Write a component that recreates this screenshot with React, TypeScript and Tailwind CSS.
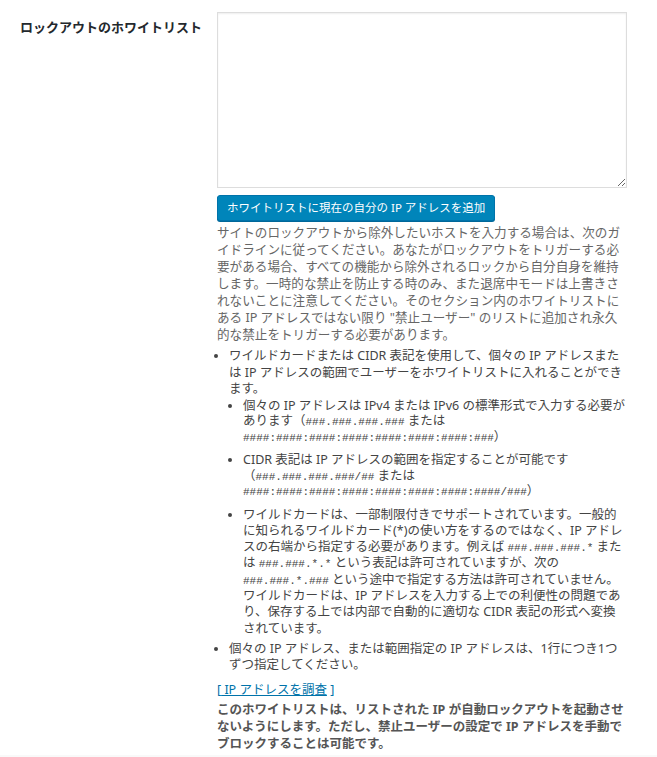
import React from 'react';

const font = { fontFamily: '"Noto Sans", "Noto Sans CJK JP", sans-serif' };

const Code = ({ children }: { children: React.ReactNode }) => (
  <code className="font-['Liberation_Mono',monospace] text-[11px] leading-none">{children}</code>
);

export default function App() {
  return (
    <div className="min-h-[757px] bg-white" style={font}>
      <div className="flex">
        {/* Label column */}
        <div className="w-[217px] shrink-0 pl-[20px] pt-[14px]">
          <label className="text-[13px] font-bold leading-[20px] text-[#23282d]">ロックアウトのホワイトリスト</label>
        </div>

        {/* Field column */}
        <div className="w-[410px] pt-[12px] pb-[3px]">
          <textarea className="block h-[176px] w-[410px] resize border border-[#dddddd] bg-white shadow-[inset_0_1px_2px_rgba(0,0,0,0.07)] outline-none" />

          <button
            type="button"
            className="mt-[7px] flex h-[26px] items-center rounded-[3px] border border-[#0073aa] bg-[#0085ba] px-[9px] text-[11.5px] leading-none text-white shadow-[0_1px_0_#006799]"
          >
            ホワイトリストに現在の自分の IP アドレスを追加
          </button>

          <p className="mt-[3px] text-[12.6px] leading-[17px] text-[#666666]">
            サイトのロックアウトから除外したいホストを入力する場合は、次のガイドラインに従ってください。あなたがロックアウトをトリガーする必要がある場合、すべての機能から除外されるロックから自分自身を維持します。一時的な禁止を防止する時のみ、また退席中モードは上書きされないことに注意してください。そのセクション内のホワイトリストにある IP アドレスではない限り "禁止ユーザー" のリストに追加され永久的な禁止をトリガーする必要があります。
          </p>

          <ul className="mt-[5px] list-disc pl-[12px] text-[12.5px] leading-[16.5px] text-[#444444] marker:text-[#444444]">
            <li className="mb-[4px]">
              ワイルドカードまたは CIDR 表記を使用して、個々の IP アドレスまたは IP アドレスの範囲でユーザーをホワイトリストに入れることができます。
              <ul className="list-disc pl-[14px]">
                <li className="mb-[8px] leading-[15.5px]">
                  個々の IP アドレスは IPv4 または IPv6 の標準形式で入力する必要があります（<Code>###.###.###.###</Code> または <Code>####:####:####:####:####:####:####:###</Code>）
                </li>
                <li className="mb-[8px] leading-[15.5px]">
                  CIDR 表記は IP アドレスの範囲を指定することが可能です（<Code>###.###.###.###/##</Code> または <Code>####:####:####:####:####:####:####:####/###</Code>）
                </li>
                <li className="leading-[16.3px]">
                  ワイルドカードは、一部制限付きでサポートされています。一般的に知られるワイルドカード(*)の使い方をするのではなく、IP アドレスの右端から指定する必要があります。例えば <Code>###.###.###.*</Code> または <Code>###.###.*.*</Code> という表記は許可されていますが、次の <Code>###.###.*.###</Code> という途中で指定する方法は許可されていません。ワイルドカードは、IP アドレスを入力する上での利便性の問題であり、保存する上では内部で自動的に適切な CIDR 表記の形式へ変換されています。
                </li>
              </ul>
            </li>
            <li>個々の IP アドレス、または範囲指定の IP アドレスは、1行につき1つずつ指定してください。</li>
          </ul>

          <p className="mt-[7px] text-[12.5px] leading-[17px] text-[#0073aa]">
            [<a href="#" className="underline"> IP アドレスを調査</a> ]
          </p>

          <p className="mt-[3px] text-[12.5px] font-bold leading-[17px] text-[#555555]">
            このホワイトリストは、リストされた IP が自動ロックアウトを起動させないようにします。ただし、禁止ユーザーの設定で IP アドレスを手動でブロックすることは可能です。
          </p>
        </div>
      </div>

      <div className="h-[20px] bg-[#f9f9f9]" />
    </div>
  );
}
